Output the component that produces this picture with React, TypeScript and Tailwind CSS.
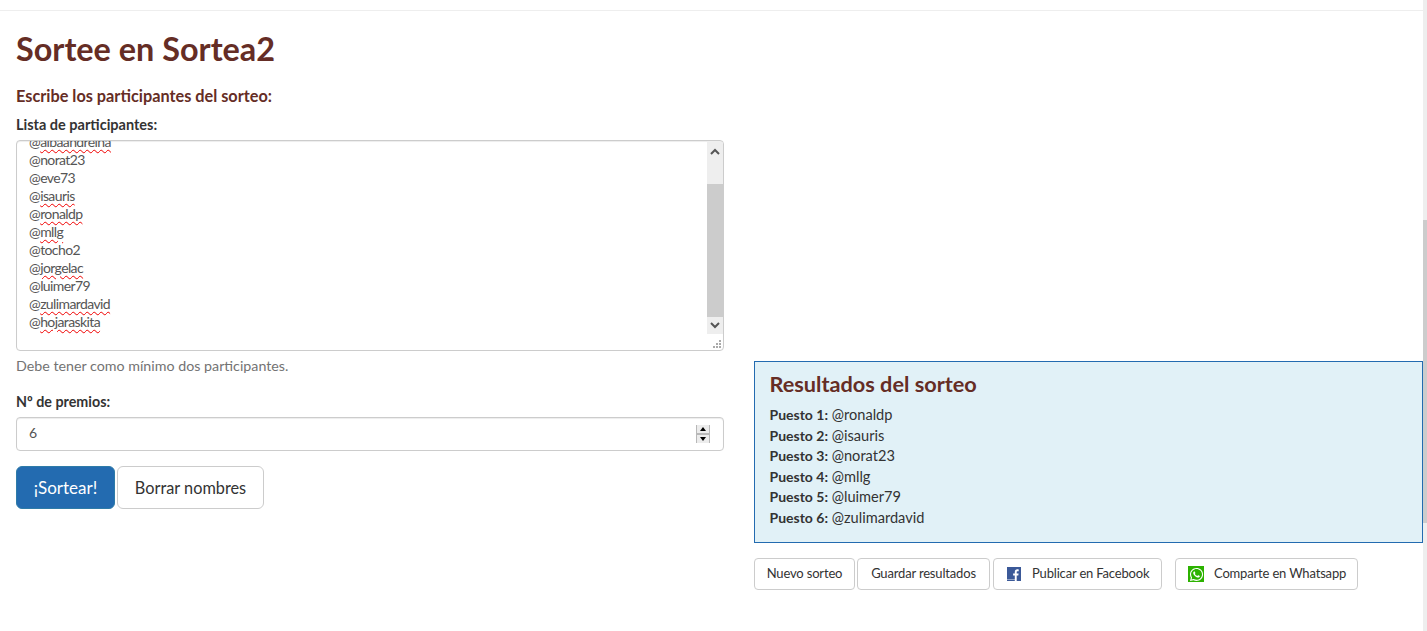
import { FaWhatsapp } from "react-icons/fa";

const NAMES = [
  { name: "@albaandreina", typo: true },
  { name: "@norat23" },
  { name: "@eve73" },
  { name: "@isauris", typo: true },
  { name: "@ronaldp", typo: true },
  { name: "@mllg", typo: true },
  { name: "@tocho2" },
  { name: "@jorgelac", typo: true },
  { name: "@luimer79" },
  { name: "@zulimardavid", typo: true },
  { name: "@hojaraskita", typo: true },
];

const RESULTS = ["@ronaldp", "@isauris", "@norat23", "@mllg", "@luimer79", "@zulimardavid"];

const smallBtn =
  "flex h-8 items-center rounded-[4px] border border-[#cccccc] bg-white text-[13px] tracking-[-0.17px] text-[#333333]";

function Participant({ name, typo }: { name: string; typo?: boolean }) {
  const at = name.slice(0, 1);
  const rest = name.slice(1);
  return (
    <div className="h-[18px] leading-[18px]">
      {at}
      <span className={typo ? "underline decoration-[#f00000] decoration-wavy decoration-1 underline-offset-[2px]" : ""}>
        {rest}
      </span>
    </div>
  );
}

function TextareaScrollbar() {
  return (
    <div className="flex h-[192px] w-4 flex-col items-center bg-[#eeeeee]">
      <svg width="16" height="42" viewBox="0 0 16 42" className="shrink-0">
        <path d="M4 12 L8 8 L12 12" fill="none" stroke="#555555" strokeWidth="2" />
      </svg>
      <div className="h-[133px] w-full shrink-0 bg-[#cccccc]" />
      <svg width="16" height="17" viewBox="0 0 16 17" className="shrink-0">
        <path d="M4 6 L8 10 L12 6" fill="none" stroke="#555555" strokeWidth="2" />
      </svg>
    </div>
  );
}

function Spinner() {
  return (
    <div className="flex h-[18px] w-[14px] flex-col justify-between bg-[#b8b8b8] px-px">
      <div className="flex h-2 items-center justify-center bg-[#ececec]">
        <div className="h-0 w-0 border-x-[3.5px] border-b-[4px] border-x-transparent border-b-black" />
      </div>
      <div className="flex h-2 items-center justify-center bg-[#ececec]">
        <div className="h-0 w-0 border-x-[3.5px] border-t-[4px] border-x-transparent border-t-black" />
      </div>
    </div>
  );
}

export default function App() {
  return (
    <div className="relative h-[631px] overflow-hidden bg-white pr-1 font-['Lato',sans-serif] text-[14px] text-[#333333]">
      <div className="mt-[10px] h-px bg-[#eeeeee]" />
      <div className="px-4 pr-0">
        <h1 className="mt-[20px] text-[32.4px] leading-[36px] font-bold text-[#652d25]">Sortee en Sortea2</h1>

        <div className="grid grid-cols-[708px_669px] gap-x-[30px]">
          <div>
            <h4 className="mt-[19px] text-[16.3px] leading-[20px] font-bold text-[#652d25]">
              Escribe los participantes del sorteo:
            </h4>
            <label className="mt-[9px] block text-[14.5px] leading-[20px] font-bold">Lista de participantes:</label>
            <div className="relative mt-[5px] flex h-[211px] justify-between overflow-hidden rounded-[4px] border border-[#cccccc] pt-px pl-3 tracking-[-0.6px] text-[#555555] shadow-[inset_0_1px_1px_rgba(0,0,0,0.075)]">
              <div className="-mt-[9px]">
                {NAMES.map((n) => (
                  <Participant key={n.name} name={n.name} typo={n.typo} />
                ))}
              </div>
              <TextareaScrollbar />
              <svg width="9" height="9" viewBox="0 0 9 9" className="absolute right-[2px] bottom-[2px]">
                <path d="M7 1h2v2H7zM4 4h2v2H4zM7 4h2v2H7zM1 7h2v2H1zM4 7h2v2H4zM7 7h2v2H7z" fill="#aaaaaa" />
              </svg>
            </div>
            <p className="mt-[5px] text-[14.26px] leading-[20px] text-[#737373]">Debe tener como mínimo dos participantes.</p>

            <label className="mt-[16px] block text-[14.3px] leading-[20px] font-bold">Nº de premios:</label>
            <div className="mt-[5px] flex h-[34px] items-center justify-between rounded-[4px] border border-[#cccccc] pr-[13px] pl-3 text-[#555555] shadow-[inset_0_1px_1px_rgba(0,0,0,0.075)]">
              <span className="-mt-[3px]">6</span>
              <Spinner />
            </div>

            <div className="mt-[15px] flex gap-[2px] text-[16.3px]">
              <button className="h-[43px] w-[99px] rounded-[6px] border border-[#2e7ba8] bg-[#236bb0] text-[17px] text-white">
                ¡Sortear!
              </button>
              <button className="h-[43px] w-[147px] rounded-[6px] border border-[#cccccc] bg-white pt-px">
                Borrar nombres
              </button>
            </div>
          </div>

          <div className="pt-[294px]">
            <div className="h-[182px] border border-[#236bb0] bg-[#e1f1f7] px-[14.5px] pt-[7px]">
              <h3 className="text-[21.7px] leading-[30px] font-bold text-[#652d25]">Resultados del sorteo</h3>
              <div className="mt-[6px]">
                {RESULTS.map((r, i) => (
                  <div key={r} className="h-[20.5px] text-[14.6px] leading-[20.5px]">
                    <b className="text-[14px]">Puesto {i + 1}:</b> {r}
                  </div>
                ))}
              </div>
            </div>

            <div className="mt-[15px] flex">
              <button className={`${smallBtn} w-[101px] justify-center`}>Nuevo sorteo</button>
              <button className={`${smallBtn} ml-[2px] w-[133px] justify-center`}>Guardar resultados</button>
              <button className={`${smallBtn} ml-[3px] w-[169px] pl-[13px]`}>
                <svg width="14" height="14" viewBox="0 0 14 14" className="mr-[11px] shrink-0">
                  <rect width="14" height="14" fill="#3b5998" />
                  <path d="M9.7 14V8.6h1.6l.3-2.1H9.7V5.3c0-.6.2-1 1-1h1V2.4c-.2 0-.8-.1-1.4-.1-1.5 0-2.5.9-2.5 2.6v1.6H6.1v2.1h1.7V14z" fill="#ffffff" />
                  <rect y="12" width="8" height="1" fill="#ffffff" opacity="0.45" />
                </svg>
                Publicar en Facebook
              </button>
              <button className={`${smallBtn} ml-[13px] w-[183px] pl-[12px]`}>
                <span className="mr-[10px] flex h-4 w-4 shrink-0 items-center justify-center bg-[#2cb200] text-[15px] text-white">
                  <FaWhatsapp />
                </span>
                Comparte en Whatsapp
              </button>
            </div>
          </div>
        </div>
      </div>

      {/* page scrollbar */}
      <div className="absolute top-0 right-0 h-full w-1 bg-[#eeeeee]">
        <div className="mt-[220px] h-[303px] bg-[#cccccc]" />
      </div>
    </div>
  );
}
